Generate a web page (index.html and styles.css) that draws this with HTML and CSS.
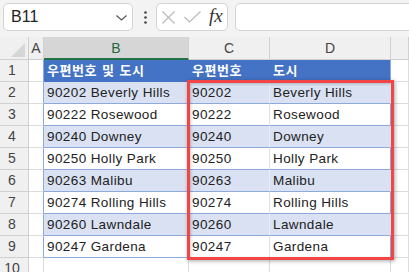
FILE: index.html
```html
<!DOCTYPE html>
<html lang="ko">
<head>
  <meta charset="UTF-8" />
  <title>우편번호 및 도시</title>
  <meta name="viewport" content="width=device-width, initial-scale=1" />
  <link rel="stylesheet" href="styles.css">
</head>
<body>

  <div class="barra">
    <div class="namebox">
      <span>B11</span>
      <svg class="chevron" width="11" height="6" viewBox="0 0 11 6"><path d="M0.5 0.5 L5.5 5 L10.5 0.5" fill="none" stroke="#555" stroke-width="1.2"/></svg>
    </div>
    <div class="dots">
      <svg width="3" height="13" viewBox="0 0 3 13"><circle cx="1.5" cy="1.5" r="1.3" fill="#444"/><circle cx="1.5" cy="6.5" r="1.3" fill="#444"/><circle cx="1.5" cy="11.5" r="1.3" fill="#444"/></svg>
    </div>
    <div class="botones">
      <svg width="13" height="13" viewBox="0 0 13 13"><path d="M0.5 0.5 L12.5 12.5 M12.5 0.5 L0.5 12.5" stroke="#b8b8b8" stroke-width="1.1"/></svg>
      <svg width="17" height="12" viewBox="0 0 17 12"><path d="M0.5 6 L5.5 11 L16.5 0.5" fill="none" stroke="#b8b8b8" stroke-width="1.1"/></svg>
      <span class="fx">fx</span>
    </div>
    <div class="entrada"></div>
  </div>

  <div class="hoja">
    <div class="celda corner"><svg width="14" height="14" viewBox="0 0 14 14"><path d="M14 0 L14 14 L0 14 Z" fill="#d6d6d6"/></svg></div>
    <div class="celda colhead">A</div>
    <div class="celda colhead activa">B</div>
    <div class="celda colhead">C</div>
    <div class="celda colhead">D</div>
    <div class="celda colhead"></div>

    <div class="celda rowhead">1</div>
    <div class="celda a borde"></div>
    <div class="celda th">우편번호 및 도시</div>
    <div class="celda th">우편번호</div>
    <div class="celda th fin">도시</div>
    <div class="celda"></div>

    <div class="celda rowhead">2</div>
    <div class="celda a borde"></div>
    <div class="celda td banda">90202 Beverly Hills</div>
    <div class="celda td banda">90202</div>
    <div class="celda td banda fin">Beverly Hills</div>
    <div class="celda"></div>

    <div class="celda rowhead">3</div>
    <div class="celda a borde"></div>
    <div class="celda td">90222 Rosewood</div>
    <div class="celda td">90222</div>
    <div class="celda td fin">Rosewood</div>
    <div class="celda"></div>

    <div class="celda rowhead">4</div>
    <div class="celda a borde"></div>
    <div class="celda td banda">90240 Downey</div>
    <div class="celda td banda">90240</div>
    <div class="celda td banda fin">Downey</div>
    <div class="celda"></div>

    <div class="celda rowhead">5</div>
    <div class="celda a borde"></div>
    <div class="celda td">90250 Holly Park</div>
    <div class="celda td">90250</div>
    <div class="celda td fin">Holly Park</div>
    <div class="celda"></div>

    <div class="celda rowhead">6</div>
    <div class="celda a borde"></div>
    <div class="celda td banda">90263 Malibu</div>
    <div class="celda td banda">90263</div>
    <div class="celda td banda fin">Malibu</div>
    <div class="celda"></div>

    <div class="celda rowhead">7</div>
    <div class="celda a borde"></div>
    <div class="celda td">90274 Rolling Hills</div>
    <div class="celda td">90274</div>
    <div class="celda td fin">Rolling Hills</div>
    <div class="celda"></div>

    <div class="celda rowhead">8</div>
    <div class="celda a borde"></div>
    <div class="celda td banda">90260 Lawndale</div>
    <div class="celda td banda">90260</div>
    <div class="celda td banda fin">Lawndale</div>
    <div class="celda"></div>

    <div class="celda rowhead">9</div>
    <div class="celda a borde"></div>
    <div class="celda td">90247 Gardena</div>
    <div class="celda td">90247</div>
    <div class="celda td fin">Gardena</div>
    <div class="celda"></div>

    <div class="celda rowhead">10</div>
    <div class="celda a"></div>
    <div class="celda"></div>
    <div class="celda"></div>
    <div class="celda"></div>
    <div class="celda"></div>

    <!-- recuadro rojo sobre C2:D9 -->
    <div class="marco"></div>
  </div>

</body>
</html>
```

FILE: styles.css
```css
body {
  margin: 0;
  background: #f3f3f3;
  font-family: "Liberation Sans", "Noto Sans CJK KR", sans-serif;
  color: #222;
  overflow: hidden;
}
.barra {
  display: flex;
  align-items: center;
  height: 28px;
  padding: 3px 0 6px 3px;
}
.namebox {
  width: 130px;
  height: 28px;
  box-sizing: border-box;
  background: #fff;
  border: 1px solid #d4d4d4;
  border-radius: 5px;
  display: flex;
  align-items: center;
  justify-content: space-between;
  padding: 0 5px 0 7px;
  font-size: 16px;
  color: #222;
}
.chevron {
  margin-top: 1px;
}
.dots {
  width: 23px;
  display: flex;
  justify-content: center;
  padding-left: 1px;
  box-sizing: border-box;
}
.dots svg {
  display: block;
}
.botones {
  width: 72px;
  height: 28px;
  box-sizing: border-box;
  background: #fff;
  border: 1px solid #d4d4d4;
  border-radius: 5px;
  display: flex;
  align-items: center;
  padding: 0 0 0 5px;
  gap: 9px;
}
.fx {
  font-family: "Liberation Serif", serif;
  font-style: italic;
  font-size: 19px;
  color: #333;
  margin-left: -1px;
  margin-top: -3px;
}
.entrada {
  flex: 1;
  height: 28px;
  box-sizing: border-box;
  margin-left: 7px;
  margin-right: -10px;
  background: #fff;
  border: 1px solid #d4d4d4;
  border-radius: 5px;
}
.hoja {
  position: relative;
  display: grid;
  grid-template-columns: 29px 15px 145px 81px 121px 1fr;
  grid-template-rows: 23px repeat(10, 22px);
  background: #fff;
}
.celda {
  box-sizing: border-box;
  border-right: 1px solid #dcdcdc;
  border-bottom: 1px solid #dcdcdc;
  font-size: 13.5px;
  line-height: 21px;
  white-space: nowrap;
  overflow: hidden;
}
.corner {
  background: #f0f0f0;
  border-color: #cfcfcf;
  display: flex;
  align-items: flex-end;
  justify-content: flex-end;
  padding: 0 3px 2px 0;
}
.corner svg {
  display: block;
}
.colhead {
  background: #f0f0f0;
  border-color: #d0d0d0;
  text-align: center;
  font-size: 14px;
  line-height: 22px;
  color: #444;
}
.colhead.activa {
  background: #d6d6d6;
  color: #1e6b3c;
  border-bottom: 2px solid #217346;
}
.rowhead {
  background: #f0f0f0;
  border-color: #d0d0d0;
  text-align: center;
  padding-right: 4px;
  font-size: 14px;
  color: #444;
}
.a.borde {
  border-right-color: #8ea9db;
}
.th {
  background: #4472c4;
  border-color: #4472c4;
  color: #fff;
  font-weight: bold;
  font-size: 13px;
  padding-left: 3px;
  letter-spacing: 0.5px;
  word-spacing: 1px;
}
.td {
  padding-left: 3px;
  letter-spacing: 0.4px;
  border-bottom-color: #8ea9db;
  border-right-color: #e2e2e2;
}
.td.banda {
  background: #d9e1f2;
  border-right-color: #e8edf7;
}
.fin {
  border-right-color: #8ea9db;
}
.marco {
  position: absolute;
  left: 187px;
  top: 43px;
  width: 207px;
  height: 180px;
  box-sizing: border-box;
  border: 3px solid #f24646;
  box-shadow: 1px 1px 4px rgba(0, 0, 0, 0.35), inset 1px 1px 3px rgba(0, 0, 0, 0.2);
}
```
